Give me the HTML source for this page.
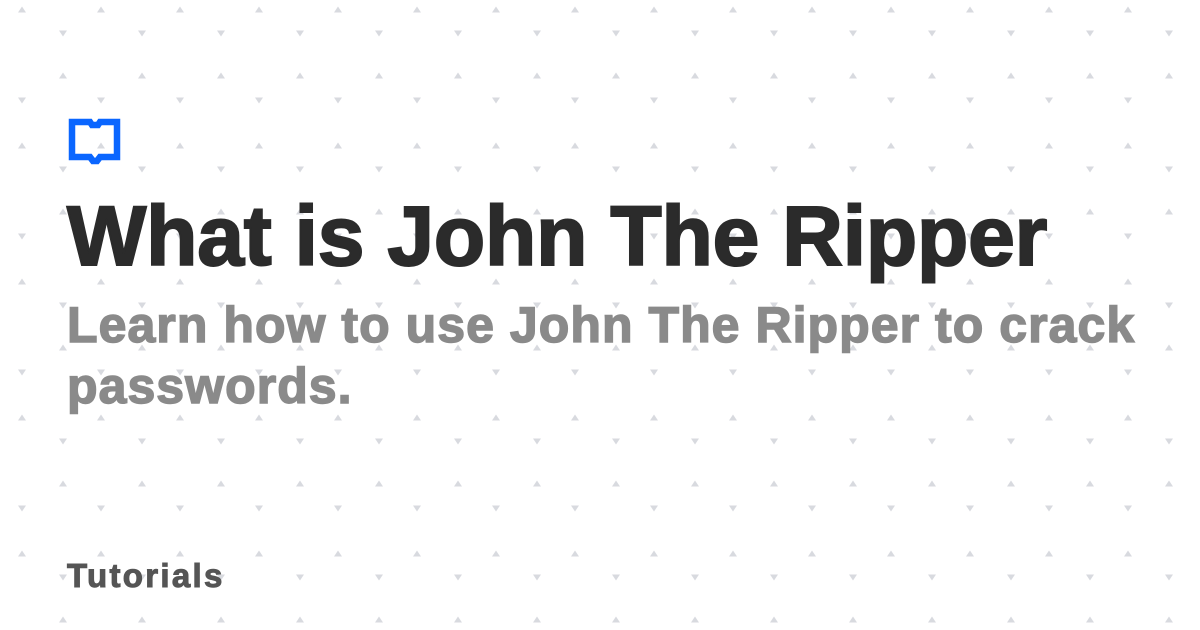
<!DOCTYPE html>
<html><head><meta charset="utf-8"><style>
html,body{margin:0;padding:0;}
body{width:1200px;height:630px;overflow:hidden;background:#fff;position:relative;font-family:"Liberation Sans",sans-serif;font-weight:bold;}
svg.bg{position:absolute;left:0;top:0;}
.t{position:absolute;left:67px;white-space:nowrap;}
</style></head><body>
<svg class="bg" width="1200" height="630">
<defs>
<pattern id="p" width="79" height="136" patternUnits="userSpaceOnUse" x="-1" y="0">
<path d="M23 6.5 L27 12.5 L19 12.5 Z" fill="#d8dadf"/>
<path d="M60 30.5 L68 30.5 L64 36.5 Z" fill="#d8dadf"/>
<path d="M64 72.5 L68 78.5 L60 78.5 Z" fill="#d8dadf"/>
<path d="M19 97.5 L27 97.5 L23 103.5 Z" fill="#d8dadf"/>
</pattern>
</defs>
<rect width="1200" height="630" fill="url(#p)"/>
<path d="M72 122 H90 L92 125 H98 L100 122 H117 V157 H100 L97 161 H93 L90 157 H72 Z" fill="none" stroke="#0a66ff" stroke-width="6.5" stroke-linejoin="miter"/>
</svg>
<div class="t" style="top:194px;font-size:84px;line-height:84px;letter-spacing:-0.2px;-webkit-text-stroke:2px #2b2b2b;color:#2b2b2b;">What is John The Ripper</div>
<div class="t" style="top:295px;font-size:50px;line-height:61px;letter-spacing:1.05px;-webkit-text-stroke:1.5px #8a8a8a;color:#8a8a8a;">Learn how to use John The Ripper to crack<br>passwords.</div>
<div class="t" style="top:559px;font-size:33px;line-height:33px;letter-spacing:2.3px;-webkit-text-stroke:1px #555;color:#555;">Tutorials</div>
</body></html>
